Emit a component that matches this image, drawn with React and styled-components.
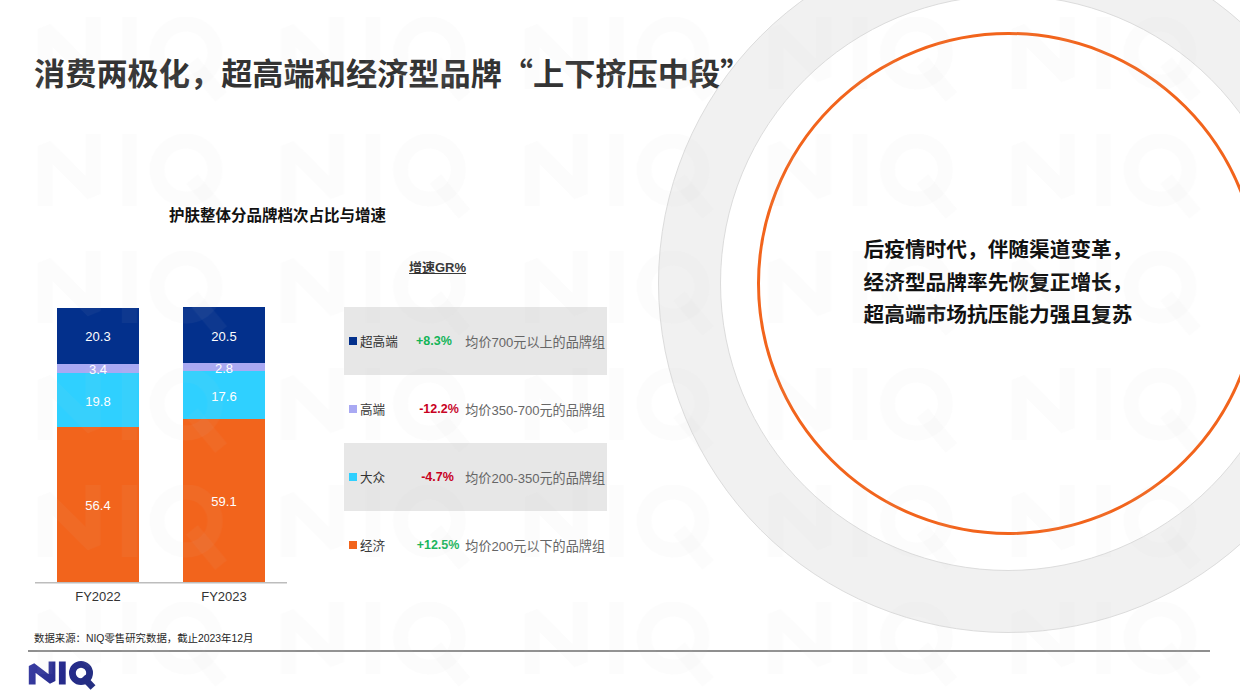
import styled, { createGlobalStyle } from 'styled-components';

const GlobalStyle = createGlobalStyle`
	html, body {
		margin: 0;
		padding: 0;
		background: #fff;
	}

	* {
		box-sizing: border-box;
	}
`;

const Page = styled.div`
	position: relative;
	display: flex;
	flex-direction: column;
	width: 1240px;
	height: 697px;
	overflow: hidden;
	background: #fff;
	font-family: 'Liberation Sans', 'Noto Sans CJK SC', sans-serif;
`;

const Ring = styled.div`
	position: absolute;
	left: 658px;
	top: -67px;
	display: flex;
	align-items: center;
	justify-content: center;
	width: 700px;
	height: 700px;
	border: 1px solid #dcdcdc;
	border-radius: 50%;
	background: #f1f1f1;
`;

const RingHole = styled.div`
	display: flex;
	align-items: center;
	justify-content: center;
	width: 576px;
	height: 576px;
	border: 1px solid #dcdcdc;
	border-radius: 50%;
	background: #fff;
`;

const Callout = styled.div`
	display: flex;
	align-items: center;
	justify-content: center;
	width: 503px;
	height: 503px;
	padding-right: 20px;
	border: 3px solid #f2641c;
	border-radius: 50%;
	color: #111;
	font-size: 20.7px;
	font-weight: 700;
	line-height: 32.7px;
	white-space: nowrap;
`;

const Title = styled.h1`
	position: relative;
	width: fit-content;
	height: 36px;
	margin: 54px 0 0 34px;
	color: #333;
	font-family: 'Noto Sans CJK SC', sans-serif;
	font-size: 31.2px;
	font-weight: 700;
	line-height: 36px;
	white-space: nowrap;
`;

const Subtitle = styled.h2`
	position: relative;
	height: 20px;
	margin: 116px 0 0 169px;
	color: #111;
	font-size: 15.5px;
	font-weight: 700;
	line-height: 20px;
`;

const ChartArea = styled.div`
	position: relative;
	display: flex;
	align-items: flex-start;
	gap: 57px;
	margin-left: 35px;
`;

const Chart = styled.div`
	width: 252px;
	margin-top: 81px;
`;

const Bars = styled.div`
	display: flex;
	align-items: flex-end;
	gap: 44px;
	height: 275px;
	padding: 0 22px;
	box-shadow: 0 1.5px 0 #bdbdbd;
`;

const Bar = styled.div`
	display: flex;
	flex-direction: column;
	width: 82px;
	height: ${({ $height }) => $height}px;
`;

const Segment = styled.div`
	display: flex;
	flex: ${({ $value }) => $value} 0 0;
	align-items: center;
	justify-content: center;
	min-height: 0;
	background: ${({ $color }) => $color};
	color: #fff;
	font-size: 13px;
	line-height: 1;
`;

const SegmentValue = styled.span`
	transform: translateY(0.5px);
`;

const BarLabels = styled.div`
	display: flex;
	gap: 44px;
	margin-top: 7px;
	padding: 0 22px;
`;

const BarLabel = styled.div`
	width: 82px;
	color: #333;
	font-size: 13px;
	line-height: 16px;
	text-align: center;
`;

const Legend = styled.div`
	width: 263px;
`;

const LegendHeading = styled.div`
	width: fit-content;
	height: 20px;
	margin: 32px 0 29px 65px;
	color: #333;
	font-size: 13px;
	font-weight: 700;
	line-height: 20px;
	text-decoration: underline;
`;

const LegendRow = styled.div`
	display: flex;
	align-items: center;
	height: 68px;
	padding: 0 2px 0 5px;
	background: ${({ $shaded }) => ($shaded ? '#e7e7e7' : 'transparent')};
`;

const Swatch = styled.span`
	flex: none;
	width: 8px;
	height: 8px;
	margin-right: 3px;
	background: ${({ $color }) => $color};
`;

const TierName = styled.span`
	flex: none;
	width: 56px;
	padding-bottom: 2px;
	color: #333;
	font-size: 12.6px;
`;

const Growth = styled.span`
	flex: none;
	width: 46px;
	padding-right: ${({ $inset }) => $inset}px;
	color: ${({ $up }) => ($up ? '#12b457' : '#c8001e')};
	font-size: 12.5px;
	font-weight: 700;
	text-align: center;
	white-space: nowrap;
`;

const TierRange = styled.span`
	flex: 1;
	color: #666;
	font-size: 13.1px;
	text-align: right;
	white-space: nowrap;
`;

const Source = styled.div`
	position: relative;
	height: 14px;
	margin: 27px 0 0 34px;
	color: #222;
	font-size: 10.4px;
	line-height: 14px;
`;

const FooterLine = styled.div`
	position: relative;
	height: 2px;
	margin: 3.5px 30px 0 28px;
	background: #8f8f8f;
`;

const LogoMark = styled.svg`
	position: relative;
	display: block;
	width: 68px;
	height: 29px;
	margin: 9.5px 0 0 28px;
`;

const Watermark = styled.svg`
	position: absolute;
	inset: 0;
	width: 1240px;
	height: 697px;
	pointer-events: none;
`;

const tiers = [
	{ name: '超高端', color: '#03308c', growth: '+8.3%', up: true, inset: 11, range: '均价700元以上的品牌组' },
	{ name: '高端', color: '#a9a9f3', growth: '-12.2%', up: false, inset: 0, range: '均价350-700元的品牌组' },
	{ name: '大众', color: '#2fd0ff', growth: '-4.7%', up: false, inset: 3, range: '均价200-350元的品牌组' },
	{ name: '经济', color: '#f2641c', growth: '+12.5%', up: true, inset: 2, range: '均价200元以下的品牌组' },
];

const years = [
	{ label: 'FY2022', height: 274, values: [20.3, 3.4, 19.8, 56.4] },
	{ label: 'FY2023', height: 275, values: [20.5, 2.8, 17.6, 59.1] },
];

const Logo = () => (
	<LogoMark viewBox="0 0 68 29">
		<defs>
			<linearGradient id="logoInk" gradientUnits="userSpaceOnUse" x1="0" y1="0" x2="68" y2="29">
				<stop offset="0" stopColor="#3b3fa4" />
				<stop offset="0.5" stopColor="#262a8c" />
				<stop offset="1" stopColor="#24307f" />
			</linearGradient>
		</defs>
		<g fill="none" stroke="url(#logoInk)" strokeWidth="6.8" strokeLinejoin="bevel">
			<path d="M4.2 23.5V5L24 20V0.5" />
			<path d="M34.3 0.5V23.5" />
			<circle cx="53" cy="12" r="8.6" />
			<path d="M55 16L65 26.5" />
		</g>
	</LogoMark>
);

const WatermarkLayer = () => (
	<Watermark viewBox="0 0 1240 697">
		<defs>
			<pattern
				id="niqTile"
				patternUnits="userSpaceOnUse"
				width="243.5"
				height="117"
				patternTransform="translate(37 17)"
			>
				<g fill="none" stroke="#c0c0c0" strokeOpacity="0.055" strokeWidth="15" strokeLinejoin="bevel">
					<path d="M8 72V12L56 60V0" />
					<path d="M92.5 0V72" />
					<circle cx="149" cy="36" r="29" />
					<path d="M155 45L184 80" />
				</g>
			</pattern>
		</defs>
		<rect width="1240" height="697" fill="url(#niqTile)" />
	</Watermark>
);

const App = () => {
	return (
		<Page>
			<GlobalStyle />
			<Ring>
				<RingHole>
					<Callout>
						<div>
							后疫情时代，伴随渠道变革，
							<br />
							经济型品牌率先恢复正增长，
							<br />
							超高端市场抗压能力强且复苏
						</div>
					</Callout>
				</RingHole>
			</Ring>
			<Title>消费两极化，超高端和经济型品牌“上下挤压中段”</Title>
			<Subtitle>护肤整体分品牌档次占比与增速</Subtitle>
			<ChartArea>
				<Chart>
					<Bars>
						{years.map((year) => (
							<Bar key={year.label} $height={year.height}>
								{year.values.map((value, index) => (
									<Segment key={index} $value={value} $color={tiers[index].color}>
										<SegmentValue>{value.toFixed(1)}</SegmentValue>
									</Segment>
								))}
							</Bar>
						))}
					</Bars>
					<BarLabels>
						{years.map((year) => (
							<BarLabel key={year.label}>{year.label}</BarLabel>
						))}
					</BarLabels>
				</Chart>
				<Legend>
					<LegendHeading>增速GR%</LegendHeading>
					{tiers.map((tier, index) => (
						<LegendRow key={tier.name} $shaded={index % 2 === 0}>
							<Swatch $color={tier.color} />
							<TierName>{tier.name}</TierName>
							<Growth $up={tier.up} $inset={tier.inset}>
								{tier.growth}
							</Growth>
							<TierRange>{tier.range}</TierRange>
						</LegendRow>
					))}
				</Legend>
			</ChartArea>
			<Source>数据来源：NIQ零售研究数据，截止2023年12月</Source>
			<FooterLine />
			<Logo />
			<WatermarkLayer />
		</Page>
	);
};

export default App;
